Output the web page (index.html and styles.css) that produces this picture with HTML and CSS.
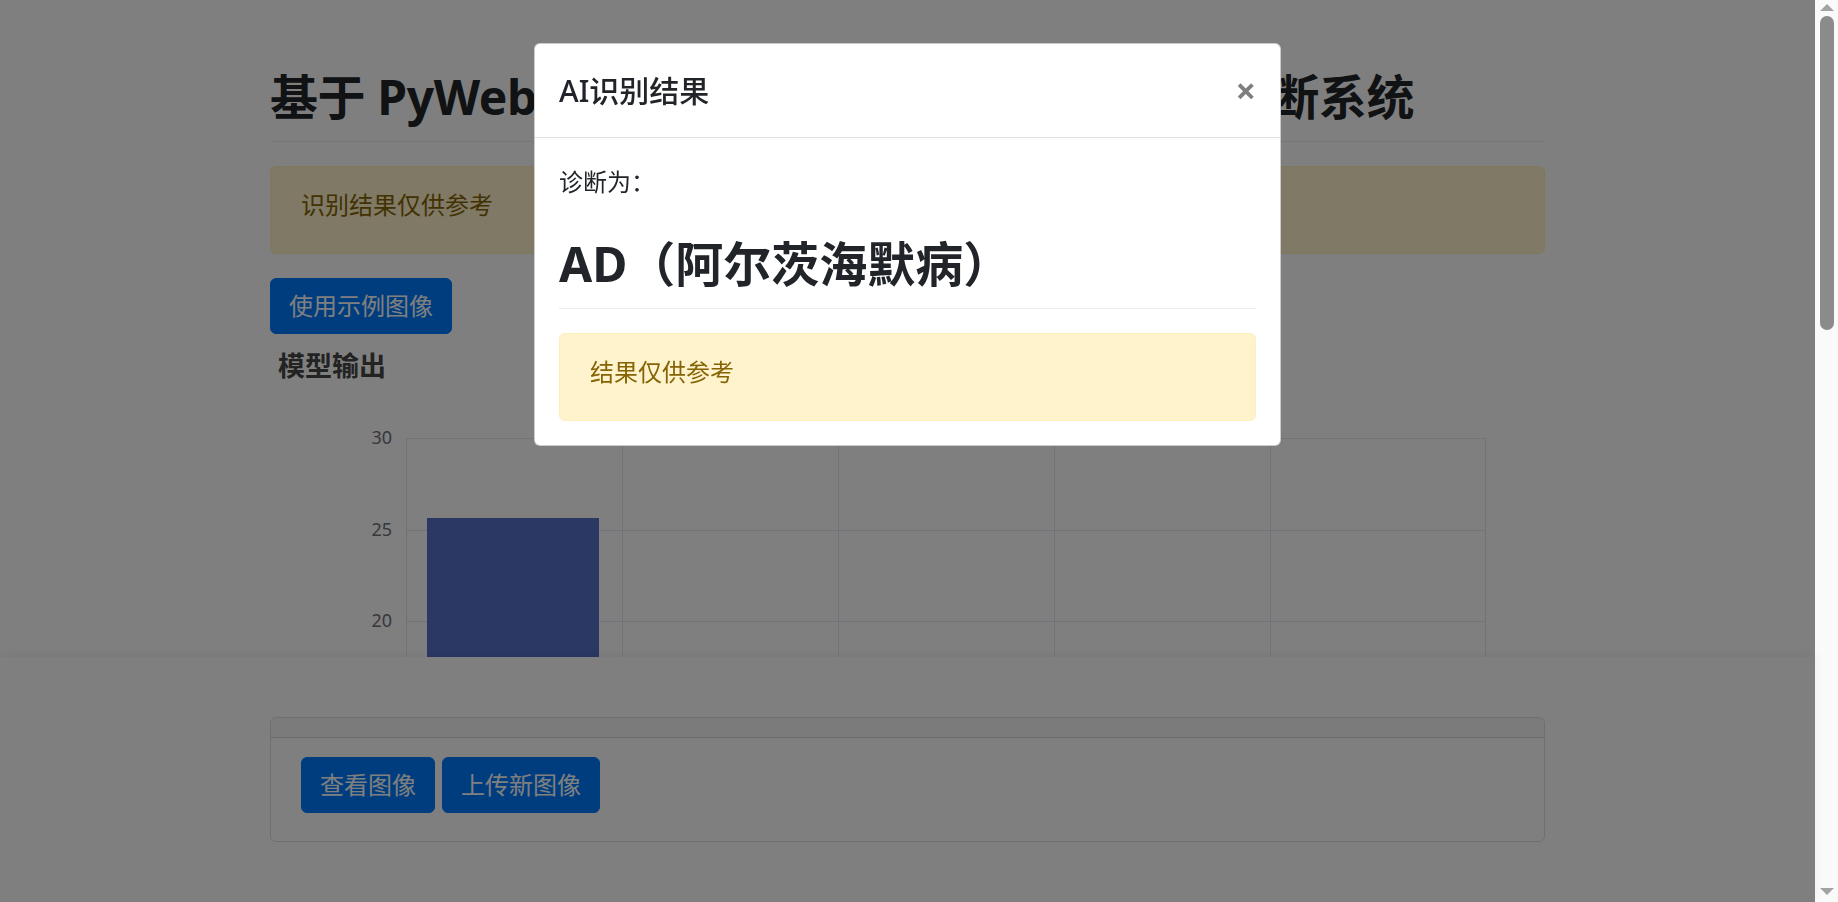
FILE: index.html
```html
<!DOCTYPE html>
<html lang="zh-CN">
<head>
<meta charset="utf-8">
<title>阿尔茨海默病诊断系统</title>
<link rel="stylesheet" href="styles.css">
</head>
<body>
<div class="viewport">
  <main class="container">
    <h1 class="page-title">基于 PyWebIO 和深度学习的阿尔茨海默病的诊断系统</h1>
    <div class="alert">识别结果仅供参考</div>
    <div class="btn-row"><button class="btn">使用示例图像</button></div>
    <div class="chart">
      <svg width="1275" height="560" viewBox="0 0 1275 560">
        <text class="chart-title" x="8" y="32">模型输出</text>
        <g class="grid">
          <line x1="136" y1="94.5" x2="1215" y2="94.5"/>
          <line x1="136" y1="186.5" x2="1215" y2="186.5"/>
          <line x1="136" y1="277.5" x2="1215" y2="277.5"/>
          <line x1="136" y1="369.5" x2="1215" y2="369.5"/>
          <line x1="136" y1="460.5" x2="1215" y2="460.5"/>
          <line x1="136" y1="552.5" x2="1215" y2="552.5"/>
          <line x1="136.5" y1="94" x2="136.5" y2="560"/>
          <line x1="352.5" y1="94" x2="352.5" y2="560"/>
          <line x1="568.5" y1="94" x2="568.5" y2="560"/>
          <line x1="784.5" y1="94" x2="784.5" y2="560"/>
          <line x1="1000.5" y1="94" x2="1000.5" y2="560"/>
          <line x1="1215.5" y1="94" x2="1215.5" y2="560"/>
        </g>
        <g class="ylabels">
          <text x="122" y="100">30</text>
          <text x="122" y="192">25</text>
          <text x="122" y="283">20</text>
          <text x="122" y="375">15</text>
          <text x="122" y="466">10</text>
        </g>
        <rect class="bar" x="157" y="174" width="172" height="386"/>
      </svg>
    </div>
  </main>

  <footer class="footer">
    <div class="footer-inner">
      <div class="card">
        <div class="card-header"></div>
        <div class="card-body">
          <button class="btn">查看图像</button>
          <button class="btn">上传新图像</button>
        </div>
      </div>
    </div>
  </footer>

  <div class="backdrop"></div>

  <div class="modal">
    <div class="modal-dialog">
      <div class="modal-header">
        <h5 class="modal-title">AI识别结果</h5>
        <button class="close" aria-label="Close">×</button>
      </div>
      <div class="modal-body">
        <p class="diag-label">诊断为：</p>
        <h1 class="diag-result">AD（阿尔茨海默病）</h1>
        <div class="alert alert-last">结果仅供参考</div>
      </div>
    </div>
  </div>
</div>

<div class="scrollbar">
  <svg class="arrow arrow-up" width="14" height="7" viewBox="0 0 14 7"><polygon points="7,0 14,7 0,7"/></svg>
  <div class="thumb"></div>
  <div class="spacer"></div>
  <svg class="arrow arrow-down" width="14" height="7" viewBox="0 0 14 7"><polygon points="0,0 14,0 7,7"/></svg>
</div>
</body>
</html>
```

FILE: styles.css
```css
html, body {
  margin: 0;
  padding: 0;
}

body {
  display: flex;
  width: 1838px;
  height: 902px;
  overflow: hidden;
  font-family: "Noto Sans", "Noto Sans CJK SC", sans-serif;
  font-size: 24px;
  line-height: 36px;
  color: #212529;
  background: #fff;
}

.viewport {
  width: 1815px;
  flex: none;
  height: 902px;
  overflow: hidden;
}

.container {
  width: 1275px;
  margin: 0 auto;
  padding-top: 66.6px;
}

.page-title {
  margin: 0 0 24px;
  padding-bottom: 14.4px;
  border-bottom: 1px solid #eaecef;
  font-size: 48px;
  line-height: 60px;
  font-weight: 700;
  letter-spacing: -0.4px;
  white-space: nowrap;
}

.alert {
  padding: 20px 30px 30px;
  margin-bottom: 24px;
  border: 1px solid #ffeeba;
  border-radius: 6px;
  background: #fff3cd;
  color: #856404;
}

.alert-last {
  margin-bottom: 0;
}

.btn-row {
  display: flex;
}

.btn {
  display: inline-block;
  padding: 9px 18px;
  font-family: inherit;
  font-size: 24px;
  line-height: 36px;
  color: #fff;
  background: #007bff;
  border: 1px solid #007bff;
  border-radius: 6px;
}

.chart {
  margin-top: 10px;
  height: 560px;
}

.chart svg {
  display: block;
}

.chart-title {
  font-family: "Noto Sans", "Noto Sans CJK SC", sans-serif;
  font-size: 27px;
  font-weight: 700;
  fill: #464646;
}

.grid line {
  stroke: #e0e6f1;
  stroke-width: 1;
}

.ylabels text {
  font-family: "Noto Sans", sans-serif;
  font-size: 18px;
  fill: #6e7079;
  text-anchor: end;
}

.bar {
  fill: #5470c6;
}

/* fixed footer */
.footer {
  position: fixed;
  left: 0;
  top: 657px;
  width: 1815px;
  height: 245px;
  background: #fff;
  box-shadow: 0 -2px 10px rgba(0, 0, 0, 0.06);
}

.footer-inner {
  width: 1275px;
  margin: 0 auto;
  padding-top: 60px;
}

.card {
  border: 1px solid rgba(0, 0, 0, 0.125);
  border-radius: 6px;
  overflow: hidden;
}

.card-header {
  height: 19px;
  background: rgba(0, 0, 0, 0.03);
  border-bottom: 1px solid rgba(0, 0, 0, 0.125);
}

.card-body {
  display: flex;
  gap: 7px;
  padding: 19px 30px 28px;
}

/* modal */
.backdrop {
  position: fixed;
  left: 0;
  top: 0;
  width: 1815px;
  height: 902px;
  background: rgba(0, 0, 0, 0.5);
}

.modal {
  position: fixed;
  left: 0;
  top: 0;
  width: 1815px;
}

.modal-dialog {
  width: 747px;
  box-sizing: border-box;
  margin: 43px auto 0;
  background: #fff;
  border: 1px solid rgba(0, 0, 0, 0.2);
  border-radius: 6px;
}

.modal-header {
  display: flex;
  align-items: flex-start;
  justify-content: space-between;
  padding: 24px;
  border-bottom: 1px solid #dee2e6;
}

.modal-title {
  margin: 0;
  font-size: 30px;
  line-height: 45px;
  font-weight: 500;
}

.close {
  margin: -24px -24px -24px auto;
  padding: 29px 24px 19px;
  background: transparent;
  border: 0;
  font-family: "Noto Sans", sans-serif;
  font-size: 36px;
  font-weight: 700;
  line-height: 36px;
  color: #000;
  opacity: 0.5;
  text-shadow: 0 1px 0 #fff;
}

.modal-body {
  padding: 24px;
}

.diag-label {
  margin: 0 0 24px;
  padding-top: 2px;
}

.diag-result {
  margin: 34px 0 24px;
  padding-bottom: 14.4px;
  border-bottom: 1px solid #eaecef;
  font-size: 48px;
  line-height: 60px;
  font-weight: 700;
}

/* scrollbar */
.scrollbar {
  width: 23px;
  flex: none;
  height: 902px;
  background: #fafafa;
  display: flex;
  flex-direction: column;
  align-items: center;
}

.arrow polygon {
  fill: #a3a3a3;
}

.arrow-up {
  margin-top: 4px;
}

.thumb {
  margin-top: 5px;
  width: 14px;
  height: 314px;
  border-radius: 7px;
  background: #8b8b8b;
}

.spacer {
  flex: 1;
}

.arrow-down {
  margin-bottom: 7px;
}
```
